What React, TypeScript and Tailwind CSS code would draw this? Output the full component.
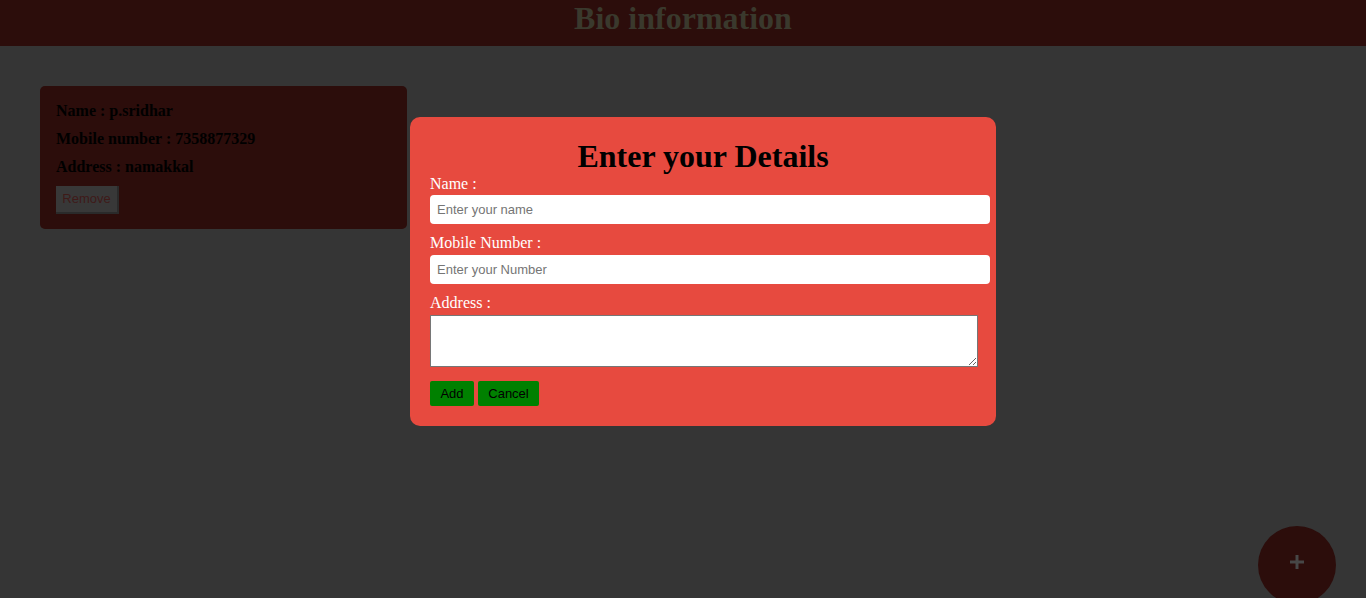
import { useState } from "react";

const serif = "font-['Liberation_Serif','Times_New_Roman',serif]";
const sans = "font-['Liberation_Sans',Arial,sans-serif]";

export default function App() {
  const [name, setName] = useState("");
  const [mobile, setMobile] = useState("");
  const [address, setAddress] = useState("");

  return (
    <div className={`relative h-[598px] w-full overflow-hidden bg-[#353535] ${serif}`}>
      {/* Header */}
      <header className="flex h-[46px] justify-center bg-[#2c0d0b]">
        <h1 className="text-[32px] font-bold leading-[37px] text-[#3a392d]">Bio information</h1>
      </header>

      {/* Saved card */}
      <div className="ml-10 mt-10 w-[367px] rounded-[5px] bg-[#2c0d0b] px-4 pb-[15px] pt-[16px] text-black">
        <p className="text-base font-bold leading-[18px]">Name : p.sridhar</p>
        <p className="mt-[10px] text-base font-bold leading-[18px]">Mobile number : 7358877329</p>
        <p className="mt-[10px] text-base font-bold leading-[18px]">Address : namakkal</p>
        <button
          className={`mt-[10px] h-[28px] w-[63px] border-r-2 border-b-2 border-[#2a2a2a] bg-[#383838] text-[13px] text-[#3f1a18] ${sans}`}
        >
          Remove
        </button>
      </div>

      {/* Floating add button */}
      <button className="absolute left-[1258px] top-[526px] flex h-[78px] w-[78px] items-center justify-center rounded-full bg-[#2c0d0b]">
        <svg width="16" height="16" viewBox="0 0 16 16" className="mt-[-6px]">
          <path d="M8 1v14M1 8h14" stroke="#474747" strokeWidth="3" />
        </svg>
      </button>

      {/* Modal */}
      <div className="absolute left-[410px] top-[117px] w-[586px] rounded-[10px] bg-[#e74a3f] px-5 pb-5 pt-[21px]">
        <h2 className="text-center text-[32px] font-bold leading-[37px] text-black">Enter your Details</h2>
        <label className="block text-base leading-[18px] text-white">Name :</label>
        <input
          value={name}
          onChange={(e) => setName(e.target.value)}
          placeholder="Enter your name"
          className={`mt-[2px] block h-[29px] w-[560px] rounded-[4px] bg-white px-[7px] text-[13px] text-black outline-none placeholder:text-[#757575] ${sans}`}
        />
        <label className="mt-[10px] block text-base leading-[18px] text-white">Mobile Number :</label>
        <input
          value={mobile}
          onChange={(e) => setMobile(e.target.value)}
          placeholder="Enter your Number"
          className={`mt-[3px] block h-[29px] w-[560px] rounded-[4px] bg-white px-[7px] text-[13px] text-black outline-none placeholder:text-[#757575] ${sans}`}
        />
        <label className="mt-[10px] block text-base leading-[18px] text-white">Address :</label>
        <textarea
          value={address}
          onChange={(e) => setAddress(e.target.value)}
          className={`mt-[3px] block h-[52px] w-[548px] border border-[#767676] bg-white text-[13px] text-black outline-none ${sans}`}
        />
        <div className={`mt-[14px] flex gap-1 ${sans}`}>
          <button className="h-[25px] w-[44px] rounded-[2px] bg-[#008000] text-[13px] text-black">Add</button>
          <button className="h-[25px] w-[61px] rounded-[2px] bg-[#008000] text-[13px] text-black">Cancel</button>
        </div>
      </div>
    </div>
  );
}
